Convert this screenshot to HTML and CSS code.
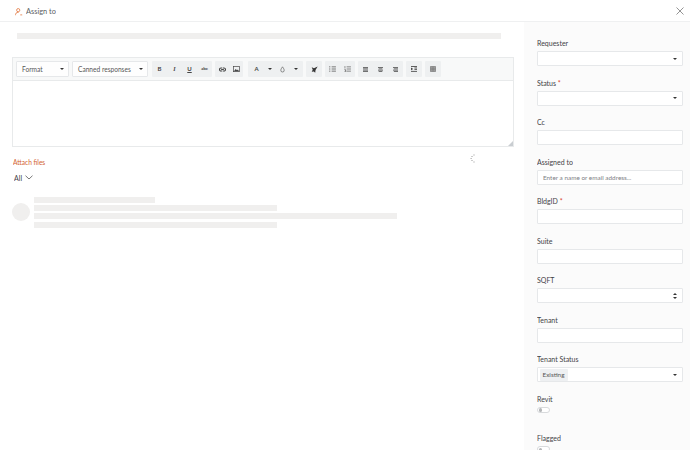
FILE: index.html
```html
<!DOCTYPE html>
<html lang="en">
<head>
<meta charset="utf-8">
<title>Assign to</title>
<link rel="stylesheet" href="styles.css">
</head>
<body>
<header class="topbar">
  <div class="title">
    <svg class="user-icon" viewBox="0 0 10 10" width="8" height="8"><circle cx="4" cy="2.7" r="2" fill="none" stroke="#e2763d" stroke-width="1"/><path d="M.7 9V8a3 3 0 0 1 3-2.6h.8M6.6 8.6h2.4" fill="none" stroke="#e2763d" stroke-width="1"/></svg>
    <span>Assign to</span>
  </div>
  <svg class="close" viewBox="0 0 8 8" width="8" height="8"><path d="M.5.5l7 7M7.5.5l-7 7" stroke="#666" stroke-width=".7" fill="none"/></svg>
</header>
<div class="page">
  <main class="main">
    <div class="skel subject"></div>
    <section class="editor">
      <div class="toolbar">
        <div class="select w53">Format<i class="caret"></i></div>
        <div class="select w76">Canned responses<i class="caret"></i></div>
        <div class="group g60 gap-l">
          <b class="tool">B</b><em class="tool">I</em><u class="tool">U</u><s class="tool small">abc</s>
        </div>
        <div class="group g28">
          <span class="tool"><svg viewBox="0 0 8 6" width="7" height="5"><path d="M3.6 1.2H2.2a1.8 1.8 0 0 0 0 3.6h1.4M4.4 1.2h1.4a1.8 1.8 0 0 1 0 3.6H4.4M2.4 3h3.2" fill="none" stroke="#444" stroke-width="1.3"/></svg></span>
          <span class="tool"><svg viewBox="0 0 8 7" width="7" height="6"><rect x=".4" y=".4" width="7.2" height="6.2" fill="none" stroke="#444" stroke-width=".8"/><path d="M1 6l2-2.6L4.6 5l1-1L7 6z" fill="#444"/></svg></span>
        </div>
        <div class="group g55 gap-c">
          <span class="tool strong">A</span><i class="caret"></i>
          <span class="tool"><svg viewBox="0 0 6 8" width="5" height="7"><path d="M3 .8C2 2.4 1 3.5 1 5a2 2 0 0 0 4 0C5 3.5 4 2.4 3 .8z" fill="none" stroke="#555" stroke-width=".8"/></svg></span><i class="caret"></i>
        </div>
        <div class="group g16 gap-c">
          <span class="tool"><svg viewBox="0 0 8 8" width="7" height="7"><path d="M7.6.6L3.4 2.6 .8 1.4l1.2 3L.8 6.6l2.4-.4L4.8 7.6l.4-3z" fill="#333"/></svg></span>
        </div>
        <div class="group g30">
          <span class="tool"><svg viewBox="0 0 8 7" width="7" height="6"><path d="M0 1h1.5M0 3.5h1.5M0 6h1.5M3 1h5M3 3.5h5M3 6h5" stroke="#555" stroke-width=".9"/></svg></span>
          <span class="tool"><svg viewBox="0 0 8 7" width="7" height="6"><path d="M1 .2v2M1 3v1.5h.8M1 5.2h1v1.6H.4M3 1h5M3 3.5h5M3 6h5" stroke="#555" stroke-width=".8" fill="none"/></svg></span>
        </div>
        <div class="group g45">
          <span class="tool"><svg viewBox="0 0 6 6" width="5" height="5"><path d="M0 .6h6M0 2.2h6M0 3.8h6M0 5.4h6" stroke="#555"/></svg></span>
          <span class="tool"><svg viewBox="0 0 6 6" width="5" height="5"><path d="M0 .6h6M.8 2.2h4.4M0 3.8h6M.8 5.4h4.4" stroke="#555"/></svg></span>
          <span class="tool"><svg viewBox="0 0 6 6" width="5" height="5"><path d="M0 .6h6M1 2.2h5M0 3.8h6M1 5.4h5" stroke="#555"/></svg></span>
        </div>
        <div class="group g16 gap-c">
          <span class="tool"><svg viewBox="0 0 7 7" width="6" height="6"><path d="M0 .6h7M4 2.3h3M4 4h3M0 6.3h7" stroke="#444"/><path d="M0 1.8L2.6 3.4 0 5z" fill="#444"/></svg></span>
        </div>
        <div class="group g16 gap-c">
          <span class="tool"><svg viewBox="0 0 7 7" width="6" height="6"><path d="M.5.5h6v6h-6zM.5 2.5h6M.5 4.5h6M2.5.5v6M4.5.5v6" stroke="#666" stroke-width=".7" fill="#bbb"/></svg></span>
        </div>
      </div>
      <div class="body"><svg class="grip" viewBox="0 0 5 5" width="5" height="5"><path d="M5 0v5H0z" fill="#c9cdd1"/></svg></div>
    </section>
    <div class="attach-row">
      <a class="attach">Attach files</a>
      <svg class="spinner" viewBox="0 0 8 10" width="8" height="10"><path d="M3.5.5h1v1h-1zM1.5 2h1v1h-1zM.6 4h1v1h-1zM1.5 6h1v1h-1zM3.5 7.4h1v1h-1z" fill="#999"/></svg>
    </div>
    <div class="filter">All<svg viewBox="0 0 8 5" width="8" height="5"><path d="M.5.7L4 4 7.5.7" fill="none" stroke="#555" stroke-width=".8"/></svg></div>
    <div class="activity">
      <div class="avatar"></div>
      <div class="lines">
        <div class="skel l121"></div>
        <div class="skel l243"></div>
        <div class="skel l363"></div>
        <div class="skel l243"></div>
      </div>
    </div>
  </main>
  <aside class="side">
    <div class="field"><label>Requester</label><div class="input">&nbsp;<i class="caret"></i></div></div>
    <div class="field"><label>Status <span class="req">*</span></label><div class="input"><i class="caret"></i></div></div>
    <div class="field"><label>Cc</label><div class="input"></div></div>
    <div class="field"><label>Assigned to</label><div class="input hint"><span>Enter a name or email address...</span></div></div>
    <div class="field"><label>BldgID <span class="req">*</span></label><div class="input"></div></div>
    <div class="field"><label>Suite</label><div class="input"></div></div>
    <div class="field"><label>SQFT</label><div class="input"><span class="spin"><i class="up"></i><i class="caret"></i></span></div></div>
    <div class="field"><label>Tenant</label><div class="input"></div></div>
    <div class="field"><label>Tenant Status</label><div class="input tagged"><span class="tag">Existing</span><i class="caret"></i></div></div>
    <div class="field"><label>Revit</label><div class="toggle"><i></i></div></div>
    <div class="field flagged"><label>Flagged</label><div class="toggle"><i></i></div></div>
  </aside>
</div>
</body>
</html>
```
FILE: styles.css
```css
* { box-sizing: border-box; }
html, body { margin: 0; height: 450px; overflow: hidden; background: #fff; }
body { font-family: Lato, "Liberation Sans", sans-serif; font-size: 7px; color: #47494d; }

.topbar { height: 22px; border-bottom: 1px solid #eff0f1; display: flex; align-items: center; justify-content: space-between; padding: 0 6px 0 15px; }
.title { display: flex; align-items: center; gap: 3px; font-size: 7.4px; color: #5a5d61; padding-top: 2px; }
.title span, .select, .attach, .filter, label, .hint span, .tag, .tool { opacity: .99; }

.page { display: grid; grid-template-columns: 524px 166px; height: 428px; }
.main { padding: 11px 10px 0 12px; position: relative; }
.skel { background: #f0efee; height: 6px; }
.subject { width: 484px; margin-left: 5px; }

.editor { margin-top: 18px; width: 502px; height: 90px; border: 1px solid #e8eaeb; display: flex; flex-direction: column; }
.toolbar { height: 23px; background: #f8f9f9; border-bottom: 1px solid #e8eaeb; display: flex; align-items: center; gap: 3px; padding-left: 3px; }
.body { flex: 1; position: relative; background: #fff; }
.grip { position: absolute; right: 0; bottom: 0; }

.select { height: 16px; background: #fff; border: 1px solid #e6e8ea; border-radius: 1px; display: flex; align-items: center; justify-content: space-between; padding: 0 4px 0 5px; font-size: 6.6px; color: #555; }
.w53 { width: 53px; }
.w76 { width: 76px; }
.caret { display: block; width: 0; height: 0; border: 2px solid transparent; border-top-color: #333; border-bottom: 0; }

.group { height: 16px; background: #eef0f1; display: flex; align-items: center; justify-content: space-around; color: #444; border-radius: 1px; }
.gap-l { margin-left: 1px; }
.g60 { width: 60px; }
.g28 { width: 28px; }
.g55 { width: 55px; margin-left: 2px; padding-right: 3px; }
.g16 { width: 16px; }
.g30 { width: 30px; }
.g45 { width: 45px; }
.tool { font-size: 6px; font-style: normal; line-height: 1; display: flex; align-items: center; justify-content: center; width: 12px; }
b.tool, .strong { font-weight: 700; }
em.tool { font-style: italic; font-weight: 700; font-family: "Liberation Serif", serif; }
u.tool { font-weight: 700; }
.small { font-size: 4.5px; text-decoration: none; font-weight: 700; }

.attach-row { display: flex; justify-content: space-between; align-items: center; margin-top: 7.5px; height: 14px; padding: 0 36px 0 1px; }
.attach { color: #d2622d; font-size: 6.6px; }
.spinner { margin-top: -5px; }
.filter { display: flex; align-items: center; gap: 3px; margin-top: 3.5px; margin-left: 2px; height: 11px; font-size: 7px; color: #3f4145; }

.activity { display: flex; gap: 4px; align-items: center; margin-top: 14px; }
.avatar { width: 18px; height: 18px; border-radius: 50%; background: #f0efee; flex: none; }
.lines { display: flex; flex-direction: column; gap: 2.2px; }
.l121 { width: 121px; }
.l243 { width: 243px; }
.l363 { width: 363px; }

.side { background: #fbfbfb; padding: 16px 7px 0 13px; overflow: hidden; }
.field { height: 39.5px; }
.field label { display: block; height: 10px; line-height: 11px; font-size: 7px; color: #3f4145; margin-bottom: 3px; }
.req { color: #d9412e; }
.input { height: 15.4px; background: #fff; border: 1px solid #e6e8ea; border-radius: 1px; display: flex; align-items: center; justify-content: flex-end; padding-right: 5px; }
.hint { justify-content: flex-start; padding-left: 5px; color: #7d8085; font-size: 6.4px; }
.tagged { justify-content: space-between; padding-left: 1.5px; }
.tag { background: #eef0f2; padding: 1.5px 3px; font-size: 6.4px; line-height: 9px; color: #555; border-radius: 1px; }
.spin { display: flex; flex-direction: column; gap: 2px; }
.up { display: block; width: 0; height: 0; border: 2px solid transparent; border-bottom-color: #333; border-top: 0; }
.toggle { width: 12.5px; height: 6px; border: 1px solid #d8dadc; border-radius: 3px; background: #fff; padding: .5px; margin-top: 1.5px; }
.toggle i { display: block; width: 3.5px; height: 3.5px; border-radius: 50%; background: #b5b7b9; }
.flagged { height: auto; }
```
